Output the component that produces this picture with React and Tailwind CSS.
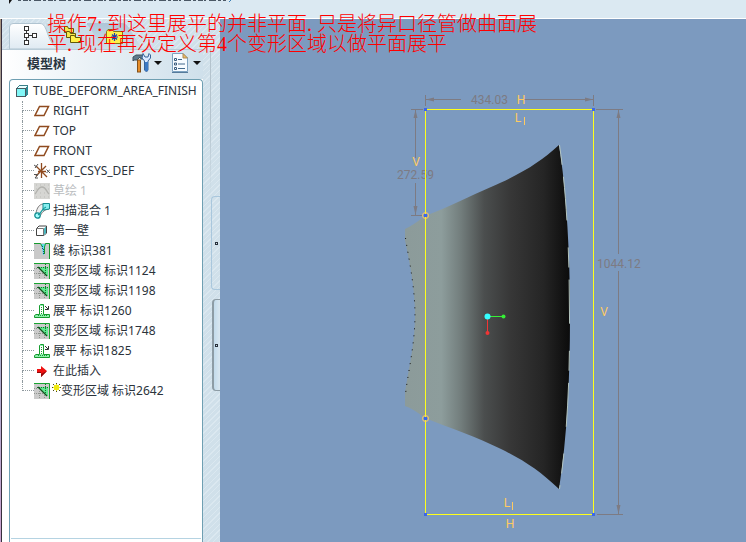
const hatch =
  "bg-[#d0e0ea] bg-[repeating-linear-gradient(135deg,#dbe8f0_0px,#dbe8f0_1px,transparent_1px,transparent_4px)]";

function PartIcon() {
  return (
    <svg width="14" height="14" viewBox="0 0 14 14" shapeRendering="crispEdges">
      <path d="M1 4 L4 1 H13 V10 L10 13 H1 Z" fill="#3b7f88" />
      <path d="M2 4 L4 2 H12 L10 4 Z" fill="#e9ffff" />
      <rect x="1.5" y="4.5" width="9" height="8" fill="#82f7f7" stroke="#4a5a60" />
      <path d="M11 4 L13 2 V10 L11 12 Z" fill="#2a8c96" />
    </svg>
  );
}

function PlaneIcon() {
  return (
    <svg width="16" height="16" viewBox="0 0 16 16">
      <path d="M5.500 3.500 H14.500 L10 12.500 H1 Z" fill="none" stroke="#8f4a1e" strokeWidth="1.5" />
    </svg>
  );
}

function CsysIcon() {
  return (
    <svg width="16" height="16" viewBox="0 0 16 16">
      <path d="M7.500 0 V15 M4 8.500 H12 M2 3 L13 14 M12 3 L2 13" stroke="#8f4a1e" strokeWidth="1.3" />
      <path d="M0 2 L3 4 M4 1 L1 5 M12.500 6.500 L16 10 M16 6.500 L12.500 10 M0 11.500 H4 L1 15 H4" stroke="#555" fill="none" />
    </svg>
  );
}

function SketchIcon() {
  return (
    <svg width="16" height="16" viewBox="0 0 16 16">
      <rect width="16" height="16" fill="#d6d6d3" />
      <path d="M2 2h1M6 2h1M10 2h1M14 2h1M2 6h1M14 6h1M6 10h1M10 10h1M2 14h1M6 14h1M10 14h1M14 14h1" stroke="#bdbdb9" />
      <path d="M1 11 C3 9 4 4 8 4 C12 4 12 8 15 11" fill="none" stroke="#b2b2ae" strokeWidth="1.3" />
    </svg>
  );
}

function SweepIcon() {
  return (
    <svg width="16" height="16" viewBox="0 0 16 16">
      <path d="M2 10 C3 5 5 1.500 9 1 L15 6 C9 7 8 10 6 13 Z" fill="#eee" stroke="#777" />
      <path d="M9 .500 H15.500 V6 L9 7 Z" fill="#86eeee" stroke="#158e92" />
      <circle cx="3.500" cy="12.500" r="2.700" fill="#a5ffff" stroke="#158e92" strokeWidth="1.300" />
      <path d="M4 12 C8 10 7 6 12 4" fill="none" stroke="#159ca0" strokeWidth="1.2" />
    </svg>
  );
}

function WallIcon() {
  return (
    <svg width="16" height="16" viewBox="0 0 16 16">
      <path d="M2.5 5.5 L5 3 H12.5 V10 L10 12.5 H2.5 Z" fill="#fff" stroke="#444" />
      <path d="M10 5.5 L12 3.5 V10 L10 12 Z" fill="#49b5bd" />
      <path d="M2.5 5.5 H9.5 V12.5" fill="none" stroke="#777" />
    </svg>
  );
}

function RipIcon() {
  return (
    <svg width="16" height="16" viewBox="0 0 16 16">
      <rect width="16" height="16" fill="#c9c9c9" />
      <path d="M7 1 H12 L10 5 L10 12 L9 12 L8 5 Z" fill="#5ee0ea" />
      <path d="M0 .500 H6.500 L8.500 4 M15.500 16 V.500 H11.500 L10.500 4 V11" fill="none" stroke="#159b2e" />
      <path d="M8.500 3 V6 M9.500 6 V12" stroke="#154c78" strokeDasharray="1 1" />
    </svg>
  );
}

function DeformIcon() {
  return (
    <svg width="16" height="16" viewBox="0 0 16 16">
      <rect width="16" height="16" fill="#cbcbcb" />
      <path d="M4 4 H14 V13 L12 12 Z" fill="#62e892" />
      <path d="M0 .500 H15.500 V16" fill="none" stroke="#18a531" />
      <path d="M3 4.500 H15 M11.500 1 V13" stroke="#17752c" strokeDasharray="1 1" />
      <path d="M4 4 L13 13" stroke="#12521f" strokeWidth="1.200" />
      <path d="M0 5.500 H3 M0 10.500 H9 M5.500 8 V16 M10.500 12 V16" stroke="#8f948f" strokeDasharray="1 1" />
    </svg>
  );
}

function FlattenIcon() {
  return (
    <svg width="16" height="16" viewBox="0 0 16 16">
      <path d="M.500 14.500 V12.500 L2 11.500 H5.500 V2.500 L6.500 1.500 H9.500 V11.500 H15.500 V14.500 Z" fill="#8ef0ae" stroke="#159b2e" />
      <path d="M6 3 H9 V11 H6 Z" fill="#fff" />
      <path d="M7.500 4 V11 M4 12.500 H13" stroke="#159b2e" strokeDasharray="1 1" />
      <path d="M11 3 L14 6 M14.500 3 V6.500 H11" fill="none" stroke="#333" />
    </svg>
  );
}

function InsertIcon() {
  return (
    <svg width="16" height="16" viewBox="0 0 16 16">
      <path d="M3 6 H7 V3 L13 8 L7 14 V10 H3 Z" fill="#ee1111" />
      <path d="M3 9 H7 V11 L13 8 L7 14 V10 H3 Z" fill="#8c0909" />
    </svg>
  );
}

function NewBadge() {
  return (
    <svg width="9" height="16" viewBox="0 0 9 16" className="ml-0.5" shapeRendering="crispEdges">
      <path d="M4 0h1v1h-1z M4 8h1v1h-1z M0 4h1v1h-1z M8 4h1v1h-1z M1 1h1v1h-1z M7 1h1v1h-1z M1 7h1v1h-1z M7 7h1v1h-1z" fill="#4a4a1c" />
      <path d="M2 2h5v5h-5z M4 1h1v7h-1z M1 4h7v1h-7z" fill="#f0ea14" />
    </svg>
  );
}

const nodes = [
  { icon: PlaneIcon, label: "RIGHT" },
  { icon: PlaneIcon, label: "TOP" },
  { icon: PlaneIcon, label: "FRONT" },
  { icon: CsysIcon, label: "PRT_CSYS_DEF" },
  { icon: SketchIcon, label: "草绘 1", disabled: true },
  { icon: SweepIcon, label: "扫描混合 1" },
  { icon: WallIcon, label: "第一壁" },
  { icon: RipIcon, label: "缝 标识381" },
  { icon: DeformIcon, label: "变形区域 标识1124" },
  { icon: DeformIcon, label: "变形区域 标识1198" },
  { icon: FlattenIcon, label: "展平 标识1260" },
  { icon: DeformIcon, label: "变形区域 标识1748" },
  { icon: FlattenIcon, label: "展平 标识1825" },
  { icon: InsertIcon, label: "在此插入" },
  { icon: DeformIcon, label: "变形区域 标识2642", fresh: true },
];

function TreeNode({ node, last }) {
  const Icon = node.icon;
  return (
    <li className="flex h-5 items-center">
      <span className="ml-3 flex h-5 w-3 shrink-0 flex-col">
        <span className="h-[10px] border-b border-l border-dotted border-[#8f999e]" />
        {!last && <span className="h-[10px] border-l border-dotted border-[#8f999e]" />}
      </span>
      <Icon />
      {node.fresh && <NewBadge />}
      <span className={node.disabled ? "ml-[3px] text-[#b9bcbe]" : node.fresh ? "" : "ml-[3px]"}>{node.label}</span>
    </li>
  );
}

function Tabs() {
  return (
    <div className="relative flex h-[30px] items-end pl-[7px]">
      {/* tab silhouettes */}
      <svg className="absolute bottom-0 left-0" width="160" height="26" viewBox="0 0 160 26">
        <defs>
          <linearGradient id="tab" x1="0" y1="0" x2="0" y2="1">
            <stop offset="0" stopColor="#ffffff" />
            <stop offset="1" stopColor="#dfeaf2" />
          </linearGradient>
          <linearGradient id="tabOff" x1="0" y1="0" x2="0" y2="1">
            <stop offset="0" stopColor="#adc5d8" />
            <stop offset="1" stopColor="#d0e0ea" />
          </linearGradient>
        </defs>
        <path d="M85 26 V0 H120 C128 0 131 16 142 26 Z" fill="url(#tabOff)" />
        <path d="M44 26 V0 H80 C90 0 92 18 103 26 Z" fill="#cbdce8" />
        <path d="M7.500 26 V4 Q7.500 .5 11 .5 H38 C46 .5 44 18 56 26 Z" fill="url(#tab)" stroke="#b0c4d1" />
      </svg>
      <button aria-label="模型树" className="relative h-[26px] w-[44px]">
        <svg width="44" height="26" viewBox="0 0 44 26" fill="none" stroke="#333" shapeRendering="crispEdges">
          <path d="M17.500 7 V10 M17.500 15 V17 M20 12.500 H24" />
          <path d="M15.500 3.500 h4 v4 h-4 z M15.500 10.500 h4 v4 h-4 z M15.500 17.500 h4 v4 h-4 z M23.500 10.500 h4 v4 h-4 z" strokeWidth="1" fill="#fff" />
        </svg>
      </button>
      <button aria-label="文件夹" className="relative h-[26px] w-[44px]">
        <svg width="44" height="26" viewBox="0 0 44 26" stroke="#625909">
          <path d="M11.500 9.500 v-6 h3 l1 2 h5 v4 z" fill="#f5e94b" />
          <path d="M13.500 14.500 v-6 h3 l1 2 h5 v4 z" fill="#f5e94b" />
          <path d="M17.500 19.500 v-7 h4 l1 2 h5 v5 z" fill="#fff04a" />
        </svg>
      </button>
      <button aria-label="收藏夹" className="relative h-[26px] w-[34px]">
        <svg width="34" height="26" viewBox="0 0 34 26">
          <path d="M9.500 20.500 V8.500 L11 6.500 H15 L16.500 8.500 H25.500 V20.500 Z" fill="#fff04a" stroke="#827614" />
          <path d="M17.500 10 V18 M14 14 H21 M15 11.500 L20 16.500 M20 11.500 L15 16.500" stroke="#1b3fae" strokeWidth="1.2" />
        </svg>
      </button>
    </div>
  );
}

function PanelHeader() {
  return (
    <div className="flex h-[30px] items-center border-t border-[#b9ccd8] bg-linear-to-r from-white to-[#cfe0eb] pb-1 pl-[25px]">
      <h2 className="w-[104px] shrink-0 text-[13px] leading-5 font-bold text-[#293541]">模型树</h2>
      <button aria-label="设置" className="flex w-[39px] shrink-0 items-center gap-0.5">
        <svg width="21" height="22" viewBox="0 0 21 22">
          <path d="M2 9 V5 L5 3 H12 L14 5 V7 H10 L9 5 L6 8 H3 Z" fill="#5e7a8b" stroke="#40515e" />
          <rect x="6.500" y="8" width="3" height="12" fill="#e68d2a" stroke="#83501a" />
          <path d="M12 1.500 L14 5 H17 L18 1.500 L19.500 3 V6 L17 9 V18 L15.500 20 L13.500 18 V9 L11 6 Z" fill="#dbeaff" stroke="#37639a" />
          <rect x="14" y="10" width="3" height="9" fill="#3b79c4" />
        </svg>
        <svg width="8" height="4" viewBox="0 0 8 4"><path d="M0 0 H8 L4 4 Z" fill="#111" /></svg>
      </button>
      <button aria-label="显示" className="flex shrink-0 items-center gap-1">
        <svg width="19" height="22" viewBox="0 0 19 22">
          <path d="M2.500 1.500 H13 L17.500 6 V19.500 H2.500 Z" fill="#f6fbff" stroke="#7ea2c0" />
          <path d="M13 1.500 V6 H17.500 Z" fill="#f1bc5c" stroke="#a88b5c" />
          <path d="M8 7.500 H12 M8 12 H15 M8 16.500 H15" stroke="#42698c" />
          <path d="M4.500 6.500 h2 v2 h-2 z M4.500 11 h2 v2 h-2 z M4.500 15.500 h2 v2 h-2 z" fill="#fff" stroke="#385b7c" />
          <path d="M2 20.500 H18" stroke="#567b9b" />
        </svg>
        <svg width="8" height="4" viewBox="0 0 8 4"><path d="M0 0 H8 L4 4 Z" fill="#111" /></svg>
      </button>
    </div>
  );
}

function ModelTree() {
  return (
    <div className="flex flex-1 bg-white pl-[7px]">
      <div className="flex min-w-0 flex-1 flex-col overflow-hidden rounded-t border border-b-0 border-[#6f9fb2] bg-white pt-px">
        <div className="flex h-5 items-center pl-[5px] whitespace-nowrap">
          <PartIcon />
          <span className="ml-1">TUBE_DEFORM_AREA_FINISH</span>
        </div>
        <ul className="flex-1 whitespace-nowrap">
          {nodes.map((node, i) => (
            <TreeNode key={node.label} node={node} last={i === nodes.length - 1} />
          ))}
        </ul>
        <div className="mx-px mb-[3px] h-px bg-[#b5d3e2]" />
      </div>
    </div>
  );
}

function Splitter() {
  return (
    <div className="flex w-[17px] flex-col items-end pt-[30px]">
      <div className="h-[147px] w-[10px] border-l border-[#b4c3cd] mask-b-from-50%" />
      <div className="flex h-[94px] w-[9px] items-center rounded-l border border-r-0 border-[#a9c7dd]">
        <span className="ml-[3px] size-[3px] border border-[#27303a]" />
      </div>
      <div className="mt-[9px] flex h-[92px] w-2 items-center rounded-l border border-l-2 border-r-0 border-[#8d9ca5] bg-linear-to-r from-[#c3dbeb] to-[#d9e7f0]">
        <span className="ml-px size-[3px] border border-[#27303a]" />
      </div>
    </div>
  );
}

function Viewport() {
  return (
    <main className="min-w-0 flex-1 bg-[#7c9abf]">
      <svg className="block h-auto w-full" viewBox="220 19 526 523" fontFamily="Roboto, sans-serif" fontSize="12">
        <defs>
          <linearGradient id="surface" gradientUnits="userSpaceOnUse" x1="405" y1="0" x2="570" y2="0">
            <stop offset="0" stopColor="#8c9b9a" />
            <stop offset="0.22" stopColor="#8d9d9c" />
            <stop offset="0.34" stopColor="#727d7c" />
            <stop offset="0.48" stopColor="#4b4e4e" />
            <stop offset="0.64" stopColor="#373737" />
            <stop offset="0.84" stopColor="#252525" />
            <stop offset="1" stopColor="#0b0b0b" />
          </linearGradient>
        </defs>

        <path
          d="M405 229 Q412 226 425 216 C449 207 470 196 491 187 C525 172 540 162 559 145 C567 195 570 257 570 317 C570 380 567 438 559 489 C540 471 525 461 501 449 C477 437 450 428 425 418 Q412 408 405 406 V393 C407 377 415 345 415 315 C415 286 408 255 405 240 Z"
          fill="url(#surface)"
        />
        <path d="M559.500 145 C567 195 569.500 257 569.500 317 C570 380 567 438 559.500 489" fill="none" stroke="#b4c5bf" strokeDasharray="20 12 44 27" />
        <path d="M405.500 238 C408 255 415 286 415 315 C415 345 407 377 405.500 395" fill="none" stroke="#111" strokeDasharray="1 6" />

        {/* dimensions */}
        <g stroke="#7d7b83" fill="none" shapeRendering="crispEdges">
          <path d="M425.500 95 V106 M593.500 95 V106 M426 99.500 H461 M524 99.500 H593" />
          <path d="M411 109.500 H423 M415.500 110 V158 M415.500 183 V215 M411 215.500 H422" />
          <path d="M596 109.500 H623 M618.500 110 V254 M618.500 271 V514 M597 514.500 H623" />
        </g>
        <g fill="#7d7b83">
          <path d="M426 99.500 L434 97.500 V101.500 Z M593 99.500 L585 97.500 V101.500 Z M415.500 110 L413.500 118 H417.500 Z M415.500 215 L413.500 206 H417.500 Z M618.500 110 L616.500 118 H620.500 Z M618.500 514 L616.500 505 H620.500 Z" />
          <text x="471" y="104">434.03</text>
          <text x="397" y="179">272.59</text>
          <text x="597" y="268">1044.12</text>
        </g>

        {/* section outline */}
        <rect x="425.500" y="109.500" width="168" height="405" fill="none" stroke="#ffff1a" shapeRendering="crispEdges" />
        <g fill="none" stroke="#ffca61">
          <circle cx="425.500" cy="215.500" r="3" />
          <circle cx="425.500" cy="418.500" r="3" />
        </g>
        <path
          d="M424 108h3v3h-3z M592 108h3v3h-3z M424 513h3v3h-3z M592 513h3v3h-3z M424 214h3v3h-3z M424 417h3v3h-3z"
          fill="#3c66e8"
        />
        <g fill="#ffca61" textAnchor="middle">
          <text x="521" y="104">H</text>
          <text x="518" y="122">L</text>
          <text x="416" y="166">V</text>
          <text x="604" y="316">V</text>
          <text x="507" y="507">L</text>
          <text x="510" y="528">H</text>
        </g>
        <path d="M524.500 117 V125 M512.500 502 V510" stroke="#ffca61" />

        {/* orientation centre */}
        <path d="M487.500 317 V333" stroke="#f03535" />
        <path d="M487 316.500 H503" stroke="#35f035" />
        <circle cx="487.500" cy="333" r="2" fill="#f03535" />
        <circle cx="503.500" cy="316.500" r="2" fill="#35f035" />
        <circle cx="487.500" cy="316.500" r="3" fill="#35ffff" />
      </svg>
    </main>
  );
}

export default function App() {
  return (
    <div className="relative flex min-h-screen flex-col overflow-hidden bg-[#7c9abf] font-['Noto_Sans','Noto_Sans_CJK_SC',sans-serif] text-xs text-[#2b333b]">
      <div className="h-[19px] border-b border-white bg-[#dbe9f2]">
        <svg className="block" width="240" height="6" viewBox="0 0 240 6">
          <path d="M9 0 H12 L9 4 Z" fill="#111" />
          <path d="M18 .5 H226" stroke="#4b5865" strokeDasharray="3 2 5 1 2 3 7 2" />
          <path d="M231 0 L229 2" stroke="#3c7fb4" />
        </svg>
      </div>
      <div className="flex flex-1">
        <aside className={`flex w-[220px] shrink-0 ${hatch}`}>
          <div className="w-[2px] border-r border-[#372f3d] bg-linear-to-b from-[#a8947f] via-[#9db4cf] to-[#c9a1ce]" />
          <div className="flex min-w-0 flex-1 flex-col">
            <Tabs />
            <PanelHeader />
            <ModelTree />
          </div>
          <Splitter />
        </aside>
        <Viewport />
      </div>

      {/* step caption over the window */}
      <p className="absolute top-[14px] left-[47px] font-['Liberation_Serif','Noto_Sans_CJK_SC',serif] text-xl leading-5 font-light whitespace-nowrap text-[#ff0000]">
        操作7<span className="inline-block w-[10px]">:</span>到这里展平的并非平面<span className="inline-block w-[10px]">.</span>只是将异口径管做曲面展
        <br />
        平<span className="inline-block w-[10px]">.</span>现在再次定义第4个变形区域以做平面展平
      </p>
    </div>
  );
}
